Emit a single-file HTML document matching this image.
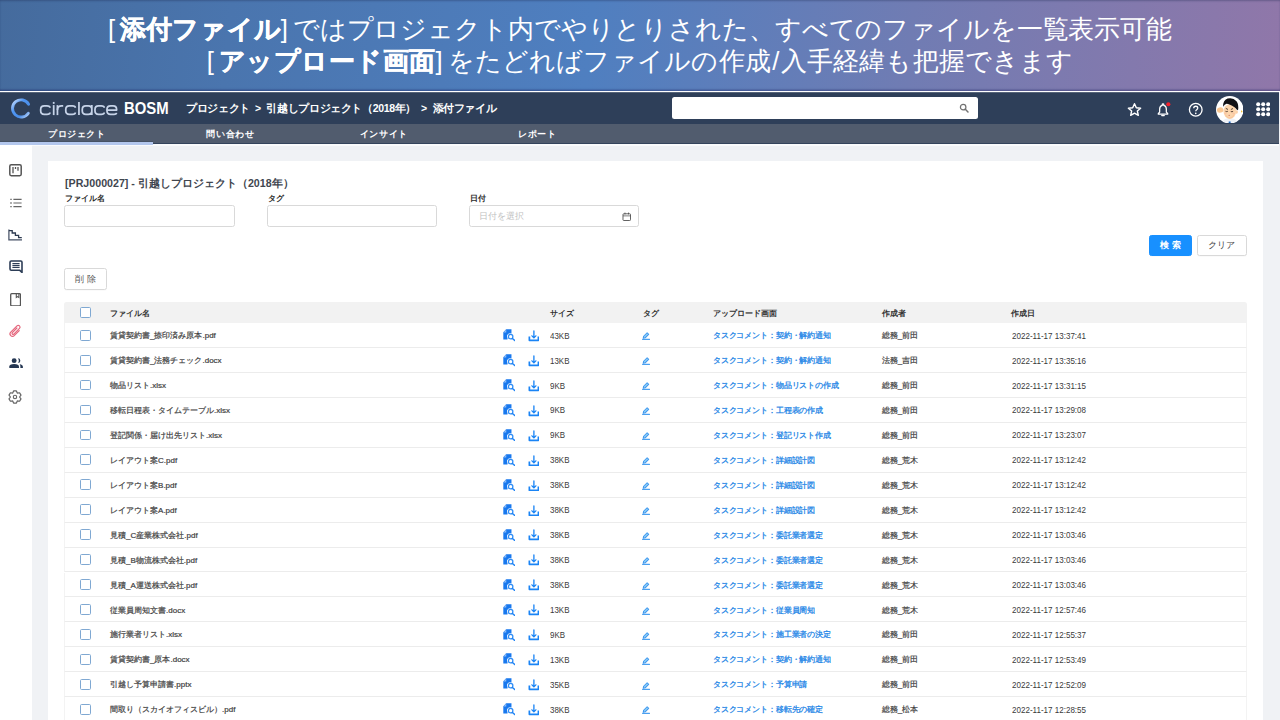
<!DOCTYPE html>
<html lang="ja">
<head>
<meta charset="utf-8">
<title>添付ファイル</title>
<style>
*{box-sizing:border-box;margin:0;padding:0}
html,body{width:1280px;height:720px;overflow:hidden;background:#f0f2f5}
body{font-family:"Liberation Sans",sans-serif;color:#333;font-size:8px;line-height:1}
#page{position:relative;width:1280px;height:720px;overflow:hidden;background:#f0f2f5}
#page>*,#table>*{position:absolute}
a{color:#1179dc;text-decoration:none}

/* banner */
#banner{left:0;top:0;width:1280px;height:91px;
 background:linear-gradient(95deg,#456b9d 0%,#4a75ae 18%,#4f7fc0 46%,#707cb3 71%,#9077a9 100%);
 box-shadow:inset 0 2px 2px -1px rgba(30,40,80,.35),inset 0 -2px 1.5px -.5px rgba(20,30,90,.38)}
#banner p{position:absolute;text-align:justify;text-align-last:justify;text-justify:inter-character;color:#fff;font-size:25.6px;line-height:32px;white-space:nowrap}
#banner p b{font-weight:bold;-webkit-text-stroke:.45px #fff}
#banner p i{font-style:normal;display:inline-block;width:12px;text-align:center;letter-spacing:0}
#banner .l1{left:108px;width:1064px;top:12.5px;letter-spacing:.13px}
#banner .l1 span{letter-spacing:-.12px}
#banner .l2{left:206.8px;width:866.4px;top:44.5px;letter-spacing:.46px}
#banner .l2 span{letter-spacing:.1px}
#banner u{text-decoration:none;margin:0 1.5px}
#wline{left:0;top:91px;width:1280px;height:1px;background:#fff}

/* top nav */
#nav{left:0;top:92px;width:1278.5px;height:32px;background:#2e3f59;box-shadow:inset 0 1px 0 rgba(255,255,255,.2)}
#nav>*{position:absolute}
#logo-c{left:9px;top:3px;width:22px;height:26px}
#logo-t{left:38px;top:6px;width:82px;height:22px}
#bosm{left:124.2px;top:9px;font-size:16px;font-weight:bold;color:#fff;letter-spacing:0;transform:scaleX(.93);transform-origin:0 50%;line-height:16px}
#crumb i{font-style:normal;margin:0 3.2px 0 2.6px}
#crumb{left:186px;top:10px;letter-spacing:-.37px;font-size:10.5px;font-weight:bold;color:#fff;white-space:nowrap;line-height:12px}
#search{left:672px;top:5.3px;width:305.7px;height:21.6px;background:#fff;border-radius:2.5px}
#search svg{position:absolute;right:8px;top:5.5px;width:10.5px;height:10.5px}
.ni{width:16px;height:16px}
#avatar{left:1215.800px;top:3.900px;width:27.500px;height:27.500px}

/* sub nav */
#subnav{z-index:2;left:0;top:124px;width:1278.5px;height:20.3px;background:#515c6e;border-bottom:1.5px solid #34445c}
#subnav span{position:absolute;top:0;width:153.2px;height:20px;text-align:center;color:#fff;font-weight:bold;font-size:9.4px;letter-spacing:.6px;text-indent:.6px;line-height:20.3px}
#subnav .act{background:transparent}
#subnav .act:after{content:"";position:absolute;left:0;right:0;top:17.9px;height:2.9px;background:#b3c7ed;box-shadow:0 -1px 0 rgba(40,50,70,.25)}

/* sidebar */
#side{left:0;top:144.3px;width:32px;height:580px;background:#fff}
#side svg{position:absolute}

/* card */
#card{left:48px;top:160.5px;width:1215px;height:570px;background:#fff}
#ttl{left:65px;top:177px;font-size:10.67px;line-height:13px;color:#41464f;font-weight:bold;white-space:nowrap}
.lbl{top:194px;font-size:8px;line-height:10px;font-weight:bold;color:#2b2b2b;white-space:nowrap}
.inp{top:205px;width:170px;height:21.6px;border:1px solid #d9d9d9;border-radius:2.5px;background:#fff}
.inp em{position:absolute;left:8.5px;top:5px;font-style:normal;font-size:9.33px;line-height:10px;color:#bfbfbf;white-space:nowrap}
.inp svg{position:absolute;right:7px;top:5.5px;width:9.5px;height:9.5px}
.btn{height:21.3px;border:1px solid #d9d9d9;border-radius:2.5px;background:#fff;font-size:9.33px;line-height:19.5px;text-align:center;color:#444;white-space:nowrap;box-shadow:0 1px 0 rgba(0,0,0,.02)}
.btn.pri{background:#1890ff;border-color:#1890ff;color:#fff;font-weight:bold}

/* table */
#table{left:64px;top:0;width:1183px;height:720px}
.th{left:0;top:302.3px;width:1183px;height:20.4px;background:#f2f2f2;border-radius:2.5px 2.5px 0 0;font-weight:bold;color:#333}
.tr{left:0;width:1183px;height:24.93px;border-bottom:1px solid #ececec;border-left:1px solid #f3f3f3;border-right:1px solid #f3f3f3;color:#444}
.th>*,.tr>*{position:absolute}
.c{top:8.1px;font-size:8px;line-height:9px;white-space:nowrap}
.th .c{top:6.3px}
.cb{left:15.8px;top:6.6px;width:10.8px;height:10.8px;border:1px solid #7fa8d2;border-radius:1.6px;background:#fff}
.th .cb{top:5.1px}
.fn{left:46px}.sz{left:486px}.tg{left:578.8px}.up{left:648.8px}.au{left:817.8px}.dt{left:947px}
.ic{top:6.2px}
.pv{left:438.7px;width:12.4px;height:12.4px}
.dl{left:463.6px;width:11.8px;height:11.8px;top:6.8px}
.ed{left:577.9px;width:8.1px;height:8.1px;top:9.3px}
.tr>*{margin-left:-1px}
.tr .sz,.tr .dt{font-size:8.7px;transform:scaleX(.915);transform-origin:0 50%;top:8.5px;color:#3a3a3a}
.tr .dt{transform:scaleX(.925);left:947.8px}
.tr .sz{left:486.4px}
.tr .up{letter-spacing:-.13px}
.tr .fn,.tr .au{color:#333}
#uline{left:32px;top:144.300px;width:1246.500px;height:1.500px;background:#fafbfc}
.tr .up{-webkit-text-stroke:.28px #2a8bea}
.tr .fn,.tr .au{-webkit-text-stroke:.22px #555}
.j,.jj{text-align:justify;text-align-last:justify;text-justify:inter-character}
#crumb .jj,#ttl .jj{display:block}

</style>
</head>
<body>
<div id="page">
<div id="banner">
<p class="l1"><i>[</i><b>添付ファイル</b><i>]</i><span>ではプロジェクト内でやりとりされた、すべてのファイルを一覧表示可能</span></p>
<p class="l2"><i>[</i><b>アップロード画面</b><i>]</i><span>をたどればファイルの作成<u>/</u>入手経緯も把握できます</span></p>
</div>
<div id="wline"></div>

<div id="nav">
<svg id="logo-c" viewBox="0 0 22 26"><defs><linearGradient id="lg" x1="0" y1="0" x2="1" y2="1"><stop offset="0" stop-color="#cfe2ff"/><stop offset=".35" stop-color="#4f95f2"/><stop offset=".7" stop-color="#4a8eea"/><stop offset="1" stop-color="#b9d4fb"/></linearGradient></defs><path d="M19.6 9.2A8.6 8.6 0 1 0 19.3 18.2" fill="none" stroke="url(#lg)" stroke-width="2.9" stroke-linecap="round"/></svg>
<svg id="logo-t" viewBox="0 0 82 22"><g fill="none" stroke="#c6d3e8" stroke-width="1.75" stroke-linecap="butt" stroke-linejoin="round">
<path d="M11.93 9.68Q11.93 7.78 8.93 7.78H6.28Q2.67 7.78 2.67 11.38V12.72Q2.67 16.32 6.28 16.32H8.93Q11.93 16.32 11.93 14.42"/>
<path d="M15.70 7.10V17.10"/>
<path d="M15.7 4.80V5.00" stroke-linecap="square"/>
<path d="M19.45 7.10V17.10"/>
<path d="M19.45 11.97Q19.45 7.78 23.65 7.78H25.2"/>
<path d="M37.33 9.68Q37.33 7.78 34.33 7.78H31.38Q27.77 7.78 27.77 11.38V12.72Q27.77 16.32 31.38 16.32H34.33Q37.33 16.32 37.33 14.42"/>
<path d="M40.95 3.90V17.10"/>
<path d="M53.83 11.38Q53.83 7.78 50.23 7.78H47.88Q44.27 7.78 44.27 11.38V12.72Q44.27 16.32 47.88 16.32H50.23Q53.83 16.32 53.83 12.72M53.83 7.10V17.10"/>
<path d="M66.22 9.68Q66.22 7.78 63.22 7.78H60.58Q56.98 7.78 56.98 11.38V12.72Q56.98 16.32 60.58 16.32H63.22Q66.22 16.32 66.22 14.42"/>
<path d="M68.97 12.05H78.62V11.38Q78.62 7.78 75.03 7.78H72.57Q68.97 7.78 68.97 11.38V12.72Q68.97 16.32 72.57 16.32H76.03Q78.33 16.32 78.62 14.82"/>
</g></svg>
<span id="bosm">BOSM</span>
<span id="crumb"><span class="jj" style="width:310.35px">プロジェクト <i>&gt;</i> 引越しプロジェクト（2018年） <i>&gt;</i> 添付ファイル</span></span>
<div id="search"><svg viewBox="0 0 24 24"><circle cx="9.5" cy="9.5" r="6.3" fill="none" stroke="#727272" stroke-width="2.8"/><path d="M14.5 14.5 20.5 20.5" stroke="#727272" stroke-width="3.4" stroke-linecap="round"/></svg></div>
<svg class="ni" style="left:1127.1px;top:10.1px;width:15px;height:15px" viewBox="0 0 24 24"><path d="M12 2.8 14.9 9.2 21.8 9.9 16.6 14.5 18.1 21.3 12 17.8 5.900 21.3 7.400 14.5 2.200 9.900 9.100 9.200Z" fill="none" stroke="#fff" stroke-width="2.3" stroke-linejoin="round"/></svg>
<svg class="ni" style="left:1155px;top:9.500px" viewBox="0 0 24 24"><path d="M5 18.200V17.200L7 15.200V10.500Q7 6.300 10.800 5.200V4.200Q10.800 3 12 3T13.200 4.200V5.200Q17 6.300 17 10.500V15.200L19 17.200V18.200Z" fill="none" stroke="#fff" stroke-width="1.900" stroke-linejoin="round"/><path d="M10.200 20.300H13.800" stroke="#fff" stroke-width="2" stroke-linecap="round"/><circle cx="20" cy="3.300" r="3.100" fill="#f5222d"/></svg>
<svg class="ni" style="left:1187.55px;top:10.2px;width:15.5px;height:15.5px" viewBox="0 0 24 24"><circle cx="12" cy="12" r="9.800" fill="none" stroke="#fff" stroke-width="2"/><path d="M8.900 9.600Q8.900 6.600 12 6.600T15.100 9.400Q15.100 11 13.400 12 12 12.900 12 14.400" fill="none" stroke="#fff" stroke-width="2"/><circle cx="12" cy="17.600" r="1.300" fill="#fff"/></svg>
<svg id="avatar" viewBox="0 0 27.5 27.5"><defs><clipPath id="ac"><circle cx="13.75" cy="13.75" r="13.3"/></clipPath></defs><circle cx="13.75" cy="13.75" r="13.75" fill="#fff"/><g clip-path="url(#ac)"><path d="M5.5 27.5Q6.5 22.3 13.7 22.3T22 27.5Z" fill="#eef1f6"/><path d="M12.700 27.500V25.400H14.600V27.500Z" fill="#1763c2"/><ellipse cx="20.500" cy="16" rx="1.400" ry="1.700" fill="#fbcfa6"/><ellipse cx="13.800" cy="15.500" rx="6.300" ry="7.300" fill="#fcd5ac"/><path d="M9 17.500Q9.500 22 13.800 22.800 18 22 18.600 17.500 16 21.500 13.800 21.500 11.500 21.500 9 17.500Z" fill="#f9c79b"/><path d="M7.100 10.800Q6.800 4.500 11.500 2.600 17 1.200 20.500 5.200 23 8.500 22 14.200L20.600 13.600Q20.300 12.500 18.500 11.200 13.500 8 10.500 7.700 8.600 8.200 7.100 10.800Z" fill="#111114"/><ellipse cx="4.100" cy="14" rx="3.300" ry="2.700" fill="#fbc893" transform="rotate(-15 4.100 14)"/><path d="M9.500 15.300Q10.600 15.900 11.800 15.300M14.800 15.500Q16 16.100 17.100 15.400" stroke="#4a332a" stroke-width=".9" fill="none"/><path d="M9.800 12.300 12 13.500M17 12.500 14.900 13.500" stroke="#3a2a22" stroke-width=".8"/><ellipse cx="13.200" cy="19.300" rx=".8" ry=".6" fill="#d9826f"/><ellipse cx="9.500" cy="17.300" rx="1.300" ry=".8" fill="#f9b9a0" opacity=".7"/><ellipse cx="17.600" cy="17.500" rx="1.300" ry=".8" fill="#f9b9a0" opacity=".7"/><path d="M25.300 14.300 26.600 15.200 25.800 16.800 25 15.500Z" fill="#f6c12c"/></g></svg>
<svg style="left:1256px;top:10.400px;width:14.400px;height:14.400px" viewBox="0 0 14.400 14.400"><g fill="#fff"><circle cx="2.200" cy="2.200" r="2.050"/><circle cx="7.200" cy="2.200" r="2.050"/><circle cx="12.200" cy="2.200" r="2.050"/><circle cx="2.200" cy="7.200" r="2.050"/><circle cx="7.200" cy="7.200" r="2.050"/><circle cx="12.200" cy="7.200" r="2.050"/><circle cx="2.200" cy="12.200" r="2.050"/><circle cx="7.200" cy="12.200" r="2.050"/><circle cx="12.200" cy="12.200" r="2.050"/></g></svg>
</div>

<div id="subnav"><span class="act" style="left:0">プロジェクト</span><span style="left:153.500px">問い合わせ</span><span style="left:307px">インサイト</span><span style="left:460.500px">レポート</span></div>

<div id="uline"></div>
<div id="side">
<svg style="left:9px;top:20px;width:13px;height:12.500px" viewBox="0 0 13 12.500"><rect x=".8" y=".8" width="11.400" height="10.900" rx="1.400" fill="none" stroke="#555" stroke-width="1.500"/><path d="M4 3V9.200M6.500 3V5M9 3V6.800" stroke="#555" stroke-width="1.300"/></svg>
<svg style="left:9.500px;top:53.500px;width:12px;height:10px" viewBox="0 0 12 10"><path d="M3.400 1.300H11.600M3.400 5H11.600M3.400 8.700H11.600" stroke="#666" stroke-width="1.200"/><path d="M.3 1.300H1.700M.3 5H1.700M.3 8.700H1.700" stroke="#666" stroke-width="1.300"/></svg>
<svg style="left:8.400px;top:84.500px;width:14.400px;height:12px" viewBox="0 0 14.400 12"><path d="M.9 .5V10.800H14" fill="none" stroke="#465166" stroke-width="1.250"/><path d="M1 1.700H4.200V4H7.400V6.300H10.600V8.600H13.800" fill="none" stroke="#2d3a50" stroke-width="1.300"/></svg>
<svg style="left:8.600px;top:115.500px;width:14px;height:13.500px" viewBox="0 0 14 13.500"><path d="M1 2.200Q1 1 2.200 1H11.800Q13 1 13 2.200V12.500L10.600 10.200H2.200Q1 10.200 1 9Z" fill="none" stroke="#2d3e57" stroke-width="1.600" stroke-linejoin="round"/><path d="M3.400 3.700H10.600M3.400 5.600H10.600M3.400 7.500H10.600" stroke="#2d3e57" stroke-width="1.200"/></svg>
<svg style="left:10px;top:148.500px;width:11.200px;height:13.500px" viewBox="0 0 11.200 13.500"><rect x=".7" y=".7" width="9.800" height="12.100" rx="1" fill="none" stroke="#555" stroke-width="1.300"/><path d="M6.300 .8V4.500L7.600 3.600 8.900 4.500V.8" fill="none" stroke="#555" stroke-width="1.100"/></svg>
<svg style="left:6.25px;top:178px;width:18px;height:18px" viewBox="-9 -9 18 18"><path transform="translate(.45 -.1) rotate(45) scale(.91)" d="M2.7 -3.2V4.6A2.7 2.7 0 0 1 -2.7 4.6V-5.1A1.95 1.95 0 0 1 1.2 -5.1V3.7A1.15 1.15 0 0 1 -1.1 3.7V-3.4" fill="none" stroke="#e5677d" stroke-width="1.3" stroke-linecap="round"/></svg>
<svg style="left:8.6px;top:213.8px;width:14.4px;height:10.4px" viewBox="0 0 14.4 10.4"><g fill="#243652"><circle cx="5.15" cy="2.65" r="2.45"/><path d="M.3 10.2V8.6Q.3 5.9 5.15 5.9T10 8.6V10.2Z"/><path d="M8.900 .2A2.450 2.450 0 1 1 8.900 5.100 4 4 0 0 0 8.900 .2Z"/><path d="M10.6 6.2Q13.9 6.7 13.9 8.7V10.2H11.4V8.6Q11.400 7.200 10.600 6.200Z"/></g></svg>
<svg style="left:7.45px;top:244.3px;width:16px;height:16px" viewBox="-8.3 -8.3 16.6 16.6"><path d="M1.46 -6.33 -1.46 -6.33 -2.37 -4.11 -4.75 -4.43 -6.22 -1.90 -4.75 -0.00 -6.22 1.90 -4.75 4.43 -2.38 4.11 -1.46 6.33 1.46 6.33 2.38 4.11 4.75 4.43 6.22 1.90 4.75 0.00 6.22 -1.90 4.75 -4.43 2.37 -4.11Z" fill="none" stroke="#666" stroke-width="1.25" stroke-linejoin="round"/><circle r="1.75" fill="none" stroke="#666" stroke-width="1.15"/></svg>
</div>

<div id="card"></div>
<div id="ttl"><span class="jj" style="width:228.61px">[PRJ000027] - 引越しプロジェクト（2018年）</span></div>
<div class="lbl jj" style="left:65px;width:40.05px">ファイル名</div>
<div class="lbl jj" style="left:267.500px;width:16.05px">タグ</div>
<div class="lbl jj" style="left:470px;width:16.05px">日付</div>
<div class="inp" style="left:64px;width:170.500px"></div>
<div class="inp" style="left:267px"></div>
<div class="inp" style="left:469px"><em class="jj" style="width:45.05px">日付を選択</em><svg viewBox="0 0 24 24"><rect x="2.500" y="4.500" width="19" height="17" rx="2" fill="none" stroke="#4a4a4a" stroke-width="2.200"/><path d="M2.500 9.800H21.500" stroke="#4a4a4a" stroke-width="1.800"/><path d="M7.500 1.500V6M16.500 1.500V6" stroke="#4a4a4a" stroke-width="2.200"/></svg></div>
<div class="btn pri" style="left:1149px;top:234.800px;width:42.500px">検 索</div>
<div class="btn" style="left:1196.800px;top:234.800px;width:50px">クリア</div>
<div class="btn" style="left:64px;top:268.400px;width:42.700px;color:#555;line-height:21.5px">削 除</div>

<div id="table">
<div class="th"><span class="cb"></span><span class="c fn j" style="width:40.05px">ファイル名</span><span class="c sz j" style="width:24.05px">サイズ</span><span class="c tg j" style="width:16.05px">タグ</span><span class="c up j" style="width:64.05px">アップロード画面</span><span class="c au j" style="width:24.05px">作成者</span><span class="c dt j" style="width:24.05px">作成日</span></div>
<div class="tr" style="top:323.20px">
<span class="cb"></span><span class="c fn j" style="width:105.85px">賃貸契約書_捺印済み原本.pdf</span>
<svg class="ic pv" viewBox="0 0 24 24"><path fill="#1878ee" d="M.6 6.400 6 .6H16.400V8.700A6.150 6.150 0 0 0 8.700 17.500V20.500H.6Z"/><path fill="#fff" opacity=".5" d="M6.300 1.200V6.600H1.300Z"/><circle cx="14.800" cy="14.800" r="4.300" fill="#fff" stroke="#2f8df6" stroke-width="2.500"/><path d="M18.300 18.300 22.600 22.300" stroke="#1f83f3" stroke-width="2.700" stroke-linecap="round"/></svg><svg class="ic dl" viewBox="0 0 24 24"><g fill="none" stroke="#1a84f5" stroke-linecap="round" stroke-linejoin="round"><path stroke-width="2.700" d="M12 1.800V15.500M8 11.900 12 16 16 11.900"/><path stroke-width="3.500" stroke-linecap="butt" d="M2.800 13.200V21H21.200V13.200"/></g></svg>
<span class="c sz">43KB</span><svg class="ic ed" viewBox="0 0 24 24"><path fill="#8fd0f8" stroke="#3f97ee" stroke-width="3" stroke-linejoin="round" d="M3.5 18.5 4.8 12.6 15.2 2.2 19.8 6.8 9.4 17.2Z"/><path d="M1.5 21.8H22.5" stroke="#4ba0f0" stroke-width="3.2" stroke-linecap="round"/></svg>
<a class="c up j" style="width:118.11px">タスクコメント：契約・解約通知</a><span class="c au j" style="width:36.50px">総務_前田</span><span class="c dt">2022-11-17 13:37:41</span>
</div>
<div class="tr" style="top:348.13px">
<span class="cb"></span><span class="c fn j" style="width:111.63px">賃貸契約書_法務チェック.docx</span>
<svg class="ic pv" viewBox="0 0 24 24"><path fill="#1878ee" d="M.6 6.400 6 .6H16.400V8.700A6.150 6.150 0 0 0 8.700 17.500V20.500H.6Z"/><path fill="#fff" opacity=".5" d="M6.300 1.200V6.600H1.300Z"/><circle cx="14.800" cy="14.800" r="4.300" fill="#fff" stroke="#2f8df6" stroke-width="2.500"/><path d="M18.300 18.300 22.600 22.300" stroke="#1f83f3" stroke-width="2.700" stroke-linecap="round"/></svg><svg class="ic dl" viewBox="0 0 24 24"><g fill="none" stroke="#1a84f5" stroke-linecap="round" stroke-linejoin="round"><path stroke-width="2.700" d="M12 1.800V15.500M8 11.900 12 16 16 11.900"/><path stroke-width="3.500" stroke-linecap="butt" d="M2.800 13.200V21H21.200V13.200"/></g></svg>
<span class="c sz">13KB</span><svg class="ic ed" viewBox="0 0 24 24"><path fill="#8fd0f8" stroke="#3f97ee" stroke-width="3" stroke-linejoin="round" d="M3.5 18.5 4.8 12.6 15.2 2.2 19.8 6.8 9.4 17.2Z"/><path d="M1.5 21.8H22.5" stroke="#4ba0f0" stroke-width="3.2" stroke-linecap="round"/></svg>
<a class="c up j" style="width:118.11px">タスクコメント：契約・解約通知</a><span class="c au j" style="width:36.50px">法務_吉田</span><span class="c dt">2022-11-17 13:35:16</span>
</div>
<div class="tr" style="top:373.06px">
<span class="cb"></span><span class="c fn j" style="width:56.05px">物品リスト.xlsx</span>
<svg class="ic pv" viewBox="0 0 24 24"><path fill="#1878ee" d="M.6 6.400 6 .6H16.400V8.700A6.150 6.150 0 0 0 8.700 17.500V20.500H.6Z"/><path fill="#fff" opacity=".5" d="M6.300 1.200V6.600H1.300Z"/><circle cx="14.800" cy="14.800" r="4.300" fill="#fff" stroke="#2f8df6" stroke-width="2.500"/><path d="M18.300 18.300 22.600 22.300" stroke="#1f83f3" stroke-width="2.700" stroke-linecap="round"/></svg><svg class="ic dl" viewBox="0 0 24 24"><g fill="none" stroke="#1a84f5" stroke-linecap="round" stroke-linejoin="round"><path stroke-width="2.700" d="M12 1.800V15.500M8 11.900 12 16 16 11.900"/><path stroke-width="3.500" stroke-linecap="butt" d="M2.800 13.200V21H21.200V13.200"/></g></svg>
<span class="c sz">9KB</span><svg class="ic ed" viewBox="0 0 24 24"><path fill="#8fd0f8" stroke="#3f97ee" stroke-width="3" stroke-linejoin="round" d="M3.5 18.5 4.8 12.6 15.2 2.2 19.8 6.8 9.4 17.2Z"/><path d="M1.5 21.8H22.5" stroke="#4ba0f0" stroke-width="3.2" stroke-linecap="round"/></svg>
<a class="c up j" style="width:125.97px">タスクコメント：物品リストの作成</a><span class="c au j" style="width:36.50px">総務_前田</span><span class="c dt">2022-11-17 13:31:15</span>
</div>
<div class="tr" style="top:397.99px">
<span class="cb"></span><span class="c fn j" style="width:120.05px">移転日程表・タイムテーブル.xlsx</span>
<svg class="ic pv" viewBox="0 0 24 24"><path fill="#1878ee" d="M.6 6.400 6 .6H16.400V8.700A6.150 6.150 0 0 0 8.700 17.500V20.500H.6Z"/><path fill="#fff" opacity=".5" d="M6.300 1.200V6.600H1.300Z"/><circle cx="14.800" cy="14.800" r="4.300" fill="#fff" stroke="#2f8df6" stroke-width="2.500"/><path d="M18.300 18.300 22.600 22.300" stroke="#1f83f3" stroke-width="2.700" stroke-linecap="round"/></svg><svg class="ic dl" viewBox="0 0 24 24"><g fill="none" stroke="#1a84f5" stroke-linecap="round" stroke-linejoin="round"><path stroke-width="2.700" d="M12 1.800V15.500M8 11.900 12 16 16 11.900"/><path stroke-width="3.500" stroke-linecap="butt" d="M2.800 13.200V21H21.200V13.200"/></g></svg>
<span class="c sz">9KB</span><svg class="ic ed" viewBox="0 0 24 24"><path fill="#8fd0f8" stroke="#3f97ee" stroke-width="3" stroke-linejoin="round" d="M3.5 18.5 4.8 12.6 15.2 2.2 19.8 6.8 9.4 17.2Z"/><path d="M1.5 21.8H22.5" stroke="#4ba0f0" stroke-width="3.2" stroke-linecap="round"/></svg>
<a class="c up j" style="width:110.24px">タスクコメント：工程表の作成</a><span class="c au j" style="width:36.50px">総務_前田</span><span class="c dt">2022-11-17 13:29:08</span>
</div>
<div class="tr" style="top:422.92px">
<span class="cb"></span><span class="c fn j" style="width:112.05px">登記関係・届け出先リスト.xlsx</span>
<svg class="ic pv" viewBox="0 0 24 24"><path fill="#1878ee" d="M.6 6.400 6 .6H16.400V8.700A6.150 6.150 0 0 0 8.700 17.500V20.500H.6Z"/><path fill="#fff" opacity=".5" d="M6.300 1.200V6.600H1.300Z"/><circle cx="14.800" cy="14.800" r="4.300" fill="#fff" stroke="#2f8df6" stroke-width="2.500"/><path d="M18.300 18.300 22.600 22.300" stroke="#1f83f3" stroke-width="2.700" stroke-linecap="round"/></svg><svg class="ic dl" viewBox="0 0 24 24"><g fill="none" stroke="#1a84f5" stroke-linecap="round" stroke-linejoin="round"><path stroke-width="2.700" d="M12 1.800V15.500M8 11.900 12 16 16 11.900"/><path stroke-width="3.500" stroke-linecap="butt" d="M2.800 13.200V21H21.200V13.200"/></g></svg>
<span class="c sz">9KB</span><svg class="ic ed" viewBox="0 0 24 24"><path fill="#8fd0f8" stroke="#3f97ee" stroke-width="3" stroke-linejoin="round" d="M3.5 18.5 4.8 12.6 15.2 2.2 19.8 6.8 9.4 17.2Z"/><path d="M1.5 21.8H22.5" stroke="#4ba0f0" stroke-width="3.2" stroke-linecap="round"/></svg>
<a class="c up j" style="width:118.11px">タスクコメント：登記リスト作成</a><span class="c au j" style="width:36.50px">総務_前田</span><span class="c dt">2022-11-17 13:23:07</span>
</div>
<div class="tr" style="top:447.85px">
<span class="cb"></span><span class="c fn j" style="width:67.17px">レイアウト案C.pdf</span>
<svg class="ic pv" viewBox="0 0 24 24"><path fill="#1878ee" d="M.6 6.400 6 .6H16.400V8.700A6.150 6.150 0 0 0 8.700 17.500V20.500H.6Z"/><path fill="#fff" opacity=".5" d="M6.300 1.200V6.600H1.300Z"/><circle cx="14.800" cy="14.800" r="4.300" fill="#fff" stroke="#2f8df6" stroke-width="2.500"/><path d="M18.300 18.300 22.600 22.300" stroke="#1f83f3" stroke-width="2.700" stroke-linecap="round"/></svg><svg class="ic dl" viewBox="0 0 24 24"><g fill="none" stroke="#1a84f5" stroke-linecap="round" stroke-linejoin="round"><path stroke-width="2.700" d="M12 1.800V15.500M8 11.900 12 16 16 11.900"/><path stroke-width="3.500" stroke-linecap="butt" d="M2.800 13.200V21H21.200V13.200"/></g></svg>
<span class="c sz">38KB</span><svg class="ic ed" viewBox="0 0 24 24"><path fill="#8fd0f8" stroke="#3f97ee" stroke-width="3" stroke-linejoin="round" d="M3.5 18.5 4.8 12.6 15.2 2.2 19.8 6.8 9.4 17.2Z"/><path d="M1.5 21.8H22.5" stroke="#4ba0f0" stroke-width="3.2" stroke-linecap="round"/></svg>
<a class="c up j" style="width:102.36px">タスクコメント：詳細設計図</a><span class="c au j" style="width:36.50px">総務_荒木</span><span class="c dt">2022-11-17 13:12:42</span>
</div>
<div class="tr" style="top:472.78px">
<span class="cb"></span><span class="c fn j" style="width:66.74px">レイアウト案B.pdf</span>
<svg class="ic pv" viewBox="0 0 24 24"><path fill="#1878ee" d="M.6 6.400 6 .6H16.400V8.700A6.150 6.150 0 0 0 8.700 17.500V20.500H.6Z"/><path fill="#fff" opacity=".5" d="M6.300 1.200V6.600H1.300Z"/><circle cx="14.800" cy="14.800" r="4.300" fill="#fff" stroke="#2f8df6" stroke-width="2.500"/><path d="M18.300 18.300 22.600 22.300" stroke="#1f83f3" stroke-width="2.700" stroke-linecap="round"/></svg><svg class="ic dl" viewBox="0 0 24 24"><g fill="none" stroke="#1a84f5" stroke-linecap="round" stroke-linejoin="round"><path stroke-width="2.700" d="M12 1.800V15.500M8 11.900 12 16 16 11.900"/><path stroke-width="3.500" stroke-linecap="butt" d="M2.800 13.200V21H21.200V13.200"/></g></svg>
<span class="c sz">38KB</span><svg class="ic ed" viewBox="0 0 24 24"><path fill="#8fd0f8" stroke="#3f97ee" stroke-width="3" stroke-linejoin="round" d="M3.5 18.5 4.8 12.6 15.2 2.2 19.8 6.8 9.4 17.2Z"/><path d="M1.5 21.8H22.5" stroke="#4ba0f0" stroke-width="3.2" stroke-linecap="round"/></svg>
<a class="c up j" style="width:102.36px">タスクコメント：詳細設計図</a><span class="c au j" style="width:36.50px">総務_荒木</span><span class="c dt">2022-11-17 13:12:42</span>
</div>
<div class="tr" style="top:497.71px">
<span class="cb"></span><span class="c fn j" style="width:66.74px">レイアウト案A.pdf</span>
<svg class="ic pv" viewBox="0 0 24 24"><path fill="#1878ee" d="M.6 6.400 6 .6H16.400V8.700A6.150 6.150 0 0 0 8.700 17.500V20.500H.6Z"/><path fill="#fff" opacity=".5" d="M6.300 1.200V6.600H1.300Z"/><circle cx="14.800" cy="14.800" r="4.300" fill="#fff" stroke="#2f8df6" stroke-width="2.500"/><path d="M18.300 18.300 22.600 22.300" stroke="#1f83f3" stroke-width="2.700" stroke-linecap="round"/></svg><svg class="ic dl" viewBox="0 0 24 24"><g fill="none" stroke="#1a84f5" stroke-linecap="round" stroke-linejoin="round"><path stroke-width="2.700" d="M12 1.800V15.500M8 11.900 12 16 16 11.900"/><path stroke-width="3.500" stroke-linecap="butt" d="M2.800 13.200V21H21.200V13.200"/></g></svg>
<span class="c sz">38KB</span><svg class="ic ed" viewBox="0 0 24 24"><path fill="#8fd0f8" stroke="#3f97ee" stroke-width="3" stroke-linejoin="round" d="M3.5 18.5 4.8 12.6 15.2 2.2 19.8 6.8 9.4 17.2Z"/><path d="M1.5 21.8H22.5" stroke="#4ba0f0" stroke-width="3.2" stroke-linecap="round"/></svg>
<a class="c up j" style="width:102.36px">タスクコメント：詳細設計図</a><span class="c au j" style="width:36.50px">総務_荒木</span><span class="c dt">2022-11-17 13:12:42</span>
</div>
<div class="tr" style="top:522.64px">
<span class="cb"></span><span class="c fn j" style="width:87.63px">見積_C産業株式会社.pdf</span>
<svg class="ic pv" viewBox="0 0 24 24"><path fill="#1878ee" d="M.6 6.400 6 .6H16.400V8.700A6.150 6.150 0 0 0 8.700 17.500V20.500H.6Z"/><path fill="#fff" opacity=".5" d="M6.300 1.200V6.600H1.300Z"/><circle cx="14.800" cy="14.800" r="4.300" fill="#fff" stroke="#2f8df6" stroke-width="2.500"/><path d="M18.300 18.300 22.600 22.300" stroke="#1f83f3" stroke-width="2.700" stroke-linecap="round"/></svg><svg class="ic dl" viewBox="0 0 24 24"><g fill="none" stroke="#1a84f5" stroke-linecap="round" stroke-linejoin="round"><path stroke-width="2.700" d="M12 1.800V15.500M8 11.900 12 16 16 11.900"/><path stroke-width="3.500" stroke-linecap="butt" d="M2.800 13.200V21H21.200V13.200"/></g></svg>
<span class="c sz">38KB</span><svg class="ic ed" viewBox="0 0 24 24"><path fill="#8fd0f8" stroke="#3f97ee" stroke-width="3" stroke-linejoin="round" d="M3.5 18.5 4.8 12.6 15.2 2.2 19.8 6.8 9.4 17.2Z"/><path d="M1.5 21.8H22.5" stroke="#4ba0f0" stroke-width="3.2" stroke-linecap="round"/></svg>
<a class="c up j" style="width:110.24px">タスクコメント：委託業者選定</a><span class="c au j" style="width:36.50px">総務_荒木</span><span class="c dt">2022-11-17 13:03:46</span>
</div>
<div class="tr" style="top:547.57px">
<span class="cb"></span><span class="c fn j" style="width:87.19px">見積_B物流株式会社.pdf</span>
<svg class="ic pv" viewBox="0 0 24 24"><path fill="#1878ee" d="M.6 6.400 6 .6H16.400V8.700A6.150 6.150 0 0 0 8.700 17.500V20.500H.6Z"/><path fill="#fff" opacity=".5" d="M6.300 1.200V6.600H1.300Z"/><circle cx="14.800" cy="14.800" r="4.300" fill="#fff" stroke="#2f8df6" stroke-width="2.500"/><path d="M18.300 18.300 22.600 22.300" stroke="#1f83f3" stroke-width="2.700" stroke-linecap="round"/></svg><svg class="ic dl" viewBox="0 0 24 24"><g fill="none" stroke="#1a84f5" stroke-linecap="round" stroke-linejoin="round"><path stroke-width="2.700" d="M12 1.800V15.500M8 11.900 12 16 16 11.900"/><path stroke-width="3.500" stroke-linecap="butt" d="M2.800 13.200V21H21.200V13.200"/></g></svg>
<span class="c sz">38KB</span><svg class="ic ed" viewBox="0 0 24 24"><path fill="#8fd0f8" stroke="#3f97ee" stroke-width="3" stroke-linejoin="round" d="M3.5 18.5 4.8 12.6 15.2 2.2 19.8 6.8 9.4 17.2Z"/><path d="M1.5 21.8H22.5" stroke="#4ba0f0" stroke-width="3.2" stroke-linecap="round"/></svg>
<a class="c up j" style="width:110.24px">タスクコメント：委託業者選定</a><span class="c au j" style="width:36.50px">総務_荒木</span><span class="c dt">2022-11-17 13:03:46</span>
</div>
<div class="tr" style="top:572.50px">
<span class="cb"></span><span class="c fn j" style="width:87.19px">見積_A運送株式会社.pdf</span>
<svg class="ic pv" viewBox="0 0 24 24"><path fill="#1878ee" d="M.6 6.400 6 .6H16.400V8.700A6.150 6.150 0 0 0 8.700 17.500V20.500H.6Z"/><path fill="#fff" opacity=".5" d="M6.300 1.200V6.600H1.300Z"/><circle cx="14.800" cy="14.800" r="4.300" fill="#fff" stroke="#2f8df6" stroke-width="2.500"/><path d="M18.300 18.300 22.600 22.300" stroke="#1f83f3" stroke-width="2.700" stroke-linecap="round"/></svg><svg class="ic dl" viewBox="0 0 24 24"><g fill="none" stroke="#1a84f5" stroke-linecap="round" stroke-linejoin="round"><path stroke-width="2.700" d="M12 1.800V15.500M8 11.900 12 16 16 11.900"/><path stroke-width="3.500" stroke-linecap="butt" d="M2.800 13.200V21H21.200V13.200"/></g></svg>
<span class="c sz">38KB</span><svg class="ic ed" viewBox="0 0 24 24"><path fill="#8fd0f8" stroke="#3f97ee" stroke-width="3" stroke-linejoin="round" d="M3.5 18.5 4.8 12.6 15.2 2.2 19.8 6.8 9.4 17.2Z"/><path d="M1.5 21.8H22.5" stroke="#4ba0f0" stroke-width="3.2" stroke-linecap="round"/></svg>
<a class="c up j" style="width:110.24px">タスクコメント：委託業者選定</a><span class="c au j" style="width:36.50px">総務_荒木</span><span class="c dt">2022-11-17 13:03:46</span>
</div>
<div class="tr" style="top:597.43px">
<span class="cb"></span><span class="c fn j" style="width:75.17px">従業員周知文書.docx</span>
<svg class="ic pv" viewBox="0 0 24 24"><path fill="#1878ee" d="M.6 6.400 6 .6H16.400V8.700A6.150 6.150 0 0 0 8.700 17.500V20.500H.6Z"/><path fill="#fff" opacity=".5" d="M6.300 1.200V6.600H1.300Z"/><circle cx="14.800" cy="14.800" r="4.300" fill="#fff" stroke="#2f8df6" stroke-width="2.500"/><path d="M18.300 18.300 22.600 22.300" stroke="#1f83f3" stroke-width="2.700" stroke-linecap="round"/></svg><svg class="ic dl" viewBox="0 0 24 24"><g fill="none" stroke="#1a84f5" stroke-linecap="round" stroke-linejoin="round"><path stroke-width="2.700" d="M12 1.800V15.500M8 11.900 12 16 16 11.900"/><path stroke-width="3.500" stroke-linecap="butt" d="M2.800 13.200V21H21.200V13.200"/></g></svg>
<span class="c sz">13KB</span><svg class="ic ed" viewBox="0 0 24 24"><path fill="#8fd0f8" stroke="#3f97ee" stroke-width="3" stroke-linejoin="round" d="M3.5 18.5 4.8 12.6 15.2 2.2 19.8 6.8 9.4 17.2Z"/><path d="M1.5 21.8H22.5" stroke="#4ba0f0" stroke-width="3.2" stroke-linecap="round"/></svg>
<a class="c up j" style="width:102.36px">タスクコメント：従業員周知</a><span class="c au j" style="width:36.50px">総務_荒木</span><span class="c dt">2022-11-17 12:57:46</span>
</div>
<div class="tr" style="top:622.36px">
<span class="cb"></span><span class="c fn j" style="width:72.05px">施行業者リスト.xlsx</span>
<svg class="ic pv" viewBox="0 0 24 24"><path fill="#1878ee" d="M.6 6.400 6 .6H16.400V8.700A6.150 6.150 0 0 0 8.700 17.500V20.500H.6Z"/><path fill="#fff" opacity=".5" d="M6.300 1.200V6.600H1.300Z"/><circle cx="14.800" cy="14.800" r="4.300" fill="#fff" stroke="#2f8df6" stroke-width="2.500"/><path d="M18.300 18.300 22.600 22.300" stroke="#1f83f3" stroke-width="2.700" stroke-linecap="round"/></svg><svg class="ic dl" viewBox="0 0 24 24"><g fill="none" stroke="#1a84f5" stroke-linecap="round" stroke-linejoin="round"><path stroke-width="2.700" d="M12 1.800V15.500M8 11.900 12 16 16 11.900"/><path stroke-width="3.500" stroke-linecap="butt" d="M2.800 13.200V21H21.200V13.200"/></g></svg>
<span class="c sz">9KB</span><svg class="ic ed" viewBox="0 0 24 24"><path fill="#8fd0f8" stroke="#3f97ee" stroke-width="3" stroke-linejoin="round" d="M3.5 18.5 4.8 12.6 15.2 2.2 19.8 6.8 9.4 17.2Z"/><path d="M1.5 21.8H22.5" stroke="#4ba0f0" stroke-width="3.2" stroke-linecap="round"/></svg>
<a class="c up j" style="width:118.11px">タスクコメント：施工業者の決定</a><span class="c au j" style="width:36.50px">総務_前田</span><span class="c dt">2022-11-17 12:55:37</span>
</div>
<div class="tr" style="top:647.29px">
<span class="cb"></span><span class="c fn j" style="width:79.63px">賃貸契約書_原本.docx</span>
<svg class="ic pv" viewBox="0 0 24 24"><path fill="#1878ee" d="M.6 6.400 6 .6H16.400V8.700A6.150 6.150 0 0 0 8.700 17.500V20.500H.6Z"/><path fill="#fff" opacity=".5" d="M6.300 1.200V6.600H1.300Z"/><circle cx="14.800" cy="14.800" r="4.300" fill="#fff" stroke="#2f8df6" stroke-width="2.500"/><path d="M18.300 18.300 22.600 22.300" stroke="#1f83f3" stroke-width="2.700" stroke-linecap="round"/></svg><svg class="ic dl" viewBox="0 0 24 24"><g fill="none" stroke="#1a84f5" stroke-linecap="round" stroke-linejoin="round"><path stroke-width="2.700" d="M12 1.800V15.500M8 11.900 12 16 16 11.900"/><path stroke-width="3.500" stroke-linecap="butt" d="M2.800 13.200V21H21.200V13.200"/></g></svg>
<span class="c sz">13KB</span><svg class="ic ed" viewBox="0 0 24 24"><path fill="#8fd0f8" stroke="#3f97ee" stroke-width="3" stroke-linejoin="round" d="M3.5 18.5 4.8 12.6 15.2 2.2 19.8 6.8 9.4 17.2Z"/><path d="M1.5 21.8H22.5" stroke="#4ba0f0" stroke-width="3.2" stroke-linecap="round"/></svg>
<a class="c up j" style="width:118.11px">タスクコメント：契約・解約通知</a><span class="c au j" style="width:36.50px">総務_前田</span><span class="c dt">2022-11-17 12:53:49</span>
</div>
<div class="tr" style="top:672.22px">
<span class="cb"></span><span class="c fn j" style="width:81.39px">引越し予算申請書.pptx</span>
<svg class="ic pv" viewBox="0 0 24 24"><path fill="#1878ee" d="M.6 6.400 6 .6H16.400V8.700A6.150 6.150 0 0 0 8.700 17.500V20.500H.6Z"/><path fill="#fff" opacity=".5" d="M6.300 1.200V6.600H1.300Z"/><circle cx="14.800" cy="14.800" r="4.300" fill="#fff" stroke="#2f8df6" stroke-width="2.500"/><path d="M18.300 18.300 22.600 22.300" stroke="#1f83f3" stroke-width="2.700" stroke-linecap="round"/></svg><svg class="ic dl" viewBox="0 0 24 24"><g fill="none" stroke="#1a84f5" stroke-linecap="round" stroke-linejoin="round"><path stroke-width="2.700" d="M12 1.800V15.500M8 11.900 12 16 16 11.900"/><path stroke-width="3.500" stroke-linecap="butt" d="M2.800 13.200V21H21.200V13.200"/></g></svg>
<span class="c sz">35KB</span><svg class="ic ed" viewBox="0 0 24 24"><path fill="#8fd0f8" stroke="#3f97ee" stroke-width="3" stroke-linejoin="round" d="M3.5 18.5 4.8 12.6 15.2 2.2 19.8 6.8 9.4 17.2Z"/><path d="M1.5 21.8H22.5" stroke="#4ba0f0" stroke-width="3.2" stroke-linecap="round"/></svg>
<a class="c up j" style="width:94.50px">タスクコメント：予算申請</a><span class="c au j" style="width:36.50px">総務_前田</span><span class="c dt">2022-11-17 12:52:09</span>
</div>
<div class="tr" style="top:697.15px">
<span class="cb"></span><span class="c fn j" style="width:125.39px">間取り（スカイオフィスビル）.pdf</span>
<svg class="ic pv" viewBox="0 0 24 24"><path fill="#1878ee" d="M.6 6.400 6 .6H16.400V8.700A6.150 6.150 0 0 0 8.700 17.500V20.500H.6Z"/><path fill="#fff" opacity=".5" d="M6.300 1.200V6.600H1.300Z"/><circle cx="14.800" cy="14.800" r="4.300" fill="#fff" stroke="#2f8df6" stroke-width="2.500"/><path d="M18.300 18.300 22.600 22.300" stroke="#1f83f3" stroke-width="2.700" stroke-linecap="round"/></svg><svg class="ic dl" viewBox="0 0 24 24"><g fill="none" stroke="#1a84f5" stroke-linecap="round" stroke-linejoin="round"><path stroke-width="2.700" d="M12 1.800V15.500M8 11.900 12 16 16 11.900"/><path stroke-width="3.500" stroke-linecap="butt" d="M2.800 13.200V21H21.200V13.200"/></g></svg>
<span class="c sz">38KB</span><svg class="ic ed" viewBox="0 0 24 24"><path fill="#8fd0f8" stroke="#3f97ee" stroke-width="3" stroke-linejoin="round" d="M3.5 18.5 4.8 12.6 15.2 2.2 19.8 6.8 9.4 17.2Z"/><path d="M1.5 21.8H22.5" stroke="#4ba0f0" stroke-width="3.2" stroke-linecap="round"/></svg>
<a class="c up j" style="width:110.24px">タスクコメント：移転先の確定</a><span class="c au j" style="width:36.50px">総務_松本</span><span class="c dt">2022-11-17 12:28:55</span>
</div>
</div>
</div>
</body>
</html>
